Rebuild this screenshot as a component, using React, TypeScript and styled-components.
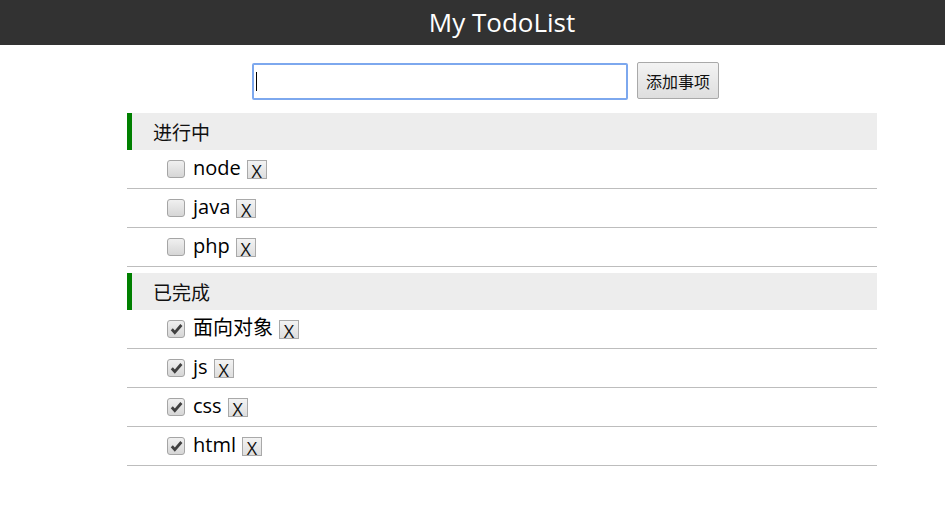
import React, { useState } from 'react';
import styled, { createGlobalStyle } from 'styled-components';

const GlobalStyle = createGlobalStyle`
  html, body {
    margin: 0;
    padding: 0;
    background: #fff;
    font-family: "Open Sans", "Noto Sans CJK SC", sans-serif;
  }
`;

const Header = styled.header`
  height: 45px;
  background: #323232;
  display: flex;
  align-items: center;
  justify-content: center;
  padding-left: 59px;
`;

const Title = styled.h1`
  margin: 0;
  color: #fff;
  font-size: 26px;
  font-weight: 400;
  line-height: 45px;
`;

const Main = styled.main`
  width: 750px;
  margin-left: 127px;
`;

const AddForm = styled.form`
  display: flex;
  align-items: flex-start;
  gap: 9px;
  padding: 17px 0 13px 125px;
`;

const InputWrap = styled.div`
  position: relative;
  margin-top: 1px;
`;

const TextInput = styled.input`
  box-sizing: border-box;
  display: block;
  width: 376px;
  height: 37px;
  border: 2px solid #7da8ee;
  border-radius: 2px;
  padding: 0 4px;
  font-size: 18px;
  font-family: inherit;
  outline: none;
  caret-color: transparent;
`;

const Caret = styled.span`
  position: absolute;
  left: 4px;
  top: 9px;
  width: 1px;
  height: 19px;
  background: #000;
`;

const AddButton = styled.button`
  box-sizing: border-box;
  height: 37px;
  padding: 0 8px;
  border: 1px solid #a9a9a9;
  border-radius: 2px;
  background: linear-gradient(#f3f3f3, #dedede);
  font-family: "Noto Sans CJK SC", sans-serif;
  font-size: 16px;
  color: #111;
`;

const SectionTitle = styled.h2<{ $first?: boolean }>`
  margin: ${p => (p.$first ? '0' : '6px')} 0 0;
  height: 37px;
  box-sizing: border-box;
  border-left: 5px solid #008000;
  background: #ededed;
  padding-left: 21px;
  font-family: "Noto Sans CJK SC", sans-serif;
  font-size: 19px;
  font-weight: 400;
  line-height: 37px;
  color: #111;
`;

const List = styled.ul`
  list-style: none;
  margin: 0;
  padding: 0;
`;

const Item = styled.li`
  height: 38px;
  border-bottom: 1px solid #bdbdbd;
  display: flex;
  align-items: center;
  padding-left: 40px;
`;

const Check = styled.span`
  box-sizing: border-box;
  width: 18px;
  height: 18px;
  border: 1px solid #a5a5a5;
  border-radius: 3px;
  background: linear-gradient(#f0f0f0, #d6d6d6);
  margin-right: 8px;
  display: flex;
  align-items: center;
  justify-content: center;
  flex-shrink: 0;
`;

const Label = styled.span`
  font-family: "Open Sans", "Noto Sans CJK SC", sans-serif;
  font-size: 20px;
  color: #000;
  line-height: 24px;
  margin-top: -2px;
`;

const DelButton = styled.span`
  box-sizing: border-box;
  margin-left: 6px;
  width: 20px;
  height: 19px;
  border: 1px solid #a9a9a9;
  background: linear-gradient(#f3f3f3, #dedede);
  display: flex;
  align-items: center;
  justify-content: center;
  font-family: "Open Sans", sans-serif;
  font-size: 18px;
  line-height: 1;
  color: #111;
  padding-top: 4px;
`;

const Tick = () => (
  <svg width="13" height="12" viewBox="0 0 13 12">
    <polyline
      points="1.8,6.2 4.8,9.6 11.4,2"
      fill="none"
      stroke="#404040"
      strokeWidth="2.8"
      strokeLinejoin="miter"
    />
  </svg>
);

interface Todo {
  title: string;
  done: boolean;
}

const initial: Todo[] = [
  { title: 'node', done: false },
  { title: 'java', done: false },
  { title: 'php', done: false },
  { title: '面向对象', done: true },
  { title: 'js', done: true },
  { title: 'css', done: true },
  { title: 'html', done: true },
];

const TodoRow = ({ todo }: { todo: Todo }) => (
  <Item>
    <Check>{todo.done && <Tick />}</Check>
    <Label>{todo.title}</Label>
    <DelButton>X</DelButton>
  </Item>
);

export default function App() {
  const [todos] = useState(initial);
  const doing = todos.filter(t => !t.done);
  const done = todos.filter(t => t.done);

  return (
    <>
      <GlobalStyle />
      <Header>
        <Title>My TodoList</Title>
      </Header>
      <Main>
        <AddForm onSubmit={e => e.preventDefault()}>
          <InputWrap>
            <TextInput />
            <Caret />
          </InputWrap>
          <AddButton type="submit">添加事项</AddButton>
        </AddForm>
        <SectionTitle $first>进行中</SectionTitle>
        <List>
          {doing.map(t => <TodoRow key={t.title} todo={t} />)}
        </List>
        <SectionTitle>已完成</SectionTitle>
        <List>
          {done.map(t => <TodoRow key={t.title} todo={t} />)}
        </List>
      </Main>
    </>
  );
}
